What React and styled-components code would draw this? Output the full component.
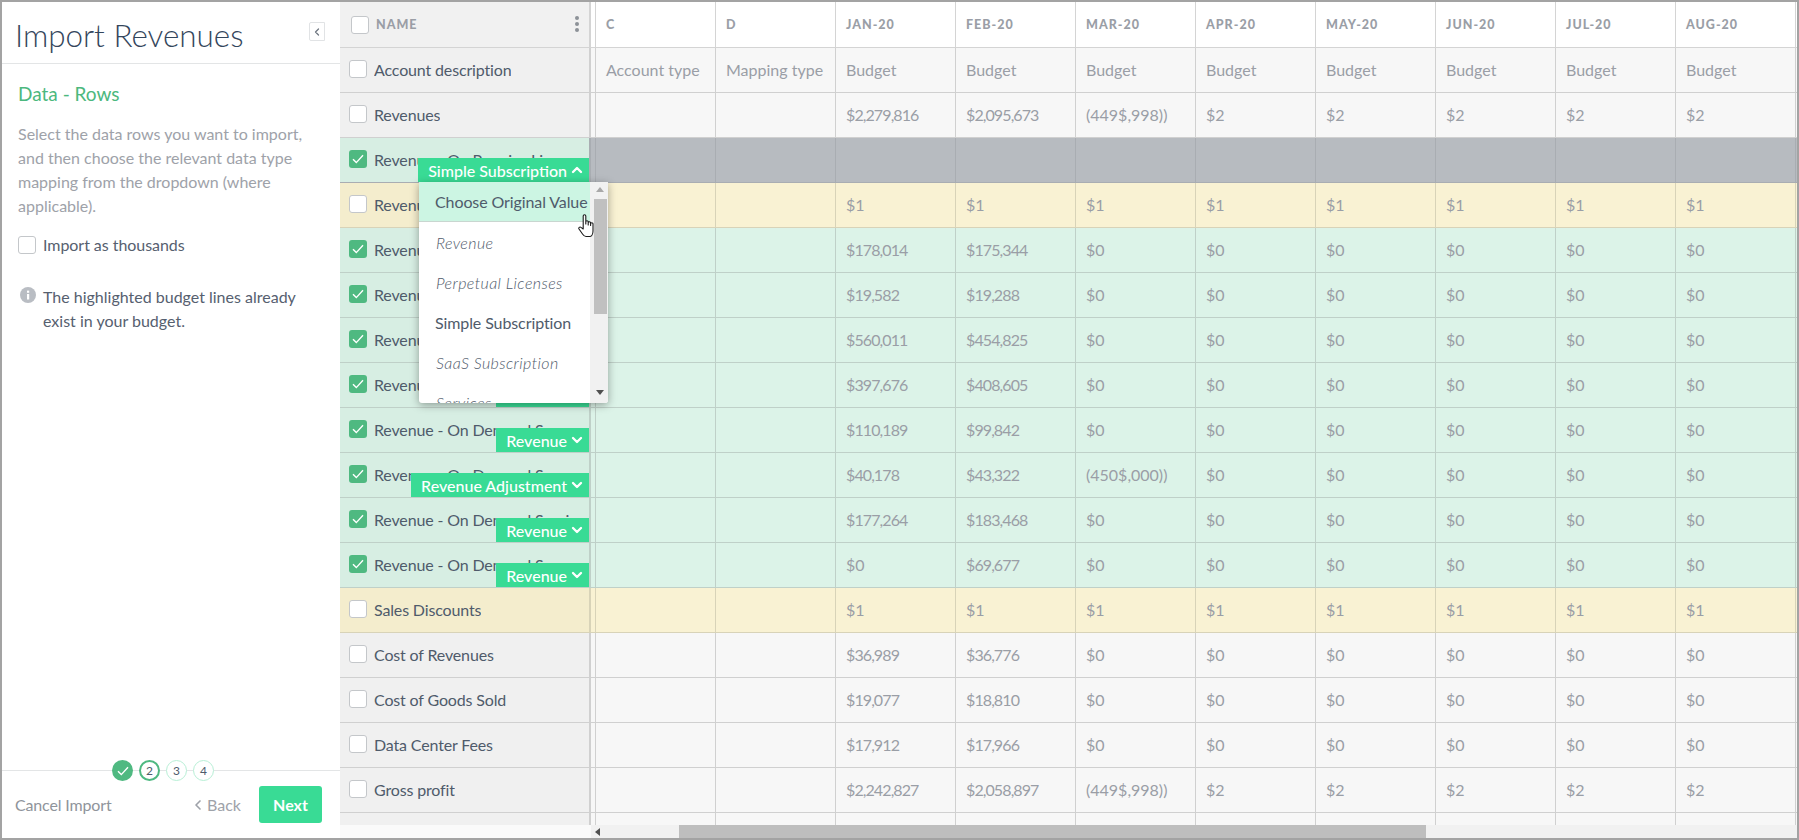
import React from 'react'
import styled, { createGlobalStyle } from 'styled-components'
import { ChevronDown, ChevronLeft, ChevronUp } from 'lucide-react'

const GlobalStyle = createGlobalStyle`
  html, body {
    margin: 0;
    background: #ffffff;
    font-family: Lato, "Liberation Sans", sans-serif;
  }
  * { box-sizing: border-box; }
`

const tones = {
  header: { name: '#f1f1f1', cell: '#ffffff', line: '#d4d4d4' },
  plain: { name: '#f0f0f0', cell: '#f7f7f7', line: '#d0d0d0' },
  gray: { name: '#d7eee3', cell: '#b7bbc0', line: '#a9adb2' },
  yellow: { name: '#f4edcd', cell: '#f9f2d3', line: '#d8d3b8' },
  green: { name: '#d7eee3', cell: '#dcf3e8', line: '#bfd0c8' },
}

const Frame = styled.div`
  width: 1799px;
  height: 840px;
  border: 2px solid #a3a3a3;
  display: flex;
  overflow: hidden;
  background: #ffffff;
`

const Sidebar = styled.aside`
  width: 338px;
  flex: none;
  display: flex;
  flex-direction: column;
`

const SideHeader = styled.header`
  height: 62px;
  flex: none;
  border-bottom: 1px solid #e3e5e6;
  display: flex;
  padding: 14px 15px 0 13px;
  justify-content: space-between;
`

const Title = styled.h1`
  margin: 0;
  font-size: 31.4px;
  line-height: 38px;
  font-weight: 300;
  color: #34465c;
`

const Collapse = styled.button`
  width: 16px;
  height: 19px;
  margin-top: 6px;
  padding: 0;
  border: 1px solid #e1e3e5;
  border-radius: 2px 0 0 2px;
  background: #ffffff;
  color: #6f7781;
  display: flex;
  align-items: center;
  justify-content: center;
`

const SideBody = styled.div`
  flex: 1;
  padding: 18px 16px 0;
`

const Heading = styled.h2`
  margin: 0 0 16px;
  font-size: 19px;
  line-height: 24px;
  font-weight: 400;
  color: #4cb87e;
`

const Intro = styled.p`
  margin: 0 0 17px;
  font-size: 16px;
  line-height: 24px;
  color: #9ea2a9;
`

const CheckRow = styled.label`
  display: flex;
  align-items: center;
  gap: 7px;
  font-size: 16px;
  letter-spacing: -0.05px;
  color: #56606f;
`

const Note = styled.div`
  display: flex;
  gap: 7px;
  margin-top: 31px;
  padding-left: 2px;
  font-size: 16px;
  line-height: 24px;
  color: #56606f;
`

const NoteIcon = styled.svg`
  width: 16px;
  height: 16px;
  flex: none;
  margin-top: 2px;
`

const SideFooter = styled.footer`
  height: 68px;
  flex: none;
  border-top: 1px solid #e3e5e6;
`

const Stepper = styled.div`
  display: flex;
  gap: 6px;
  margin: -11px 0 0 110px;
  position: relative;
`

const Step = styled.span`
  width: 21px;
  height: 21px;
  border-radius: 50%;
  display: flex;
  align-items: center;
  justify-content: center;
  font-size: 12px;
  color: #4f5b6b;
  background: ${p => (p.$done ? '#4fb981' : '#ffffff')};
  border: ${p => (p.$active ? '2px solid #4fb981' : p.$done ? 'none' : '1px solid #b8efd6')};
`

const Actions = styled.div`
  display: flex;
  align-items: center;
  padding: 5px 18px 0 13px;
`

const CancelLink = styled.span`
  flex: 1;
  font-size: 16px;
  letter-spacing: -0.15px;
  color: #8f949b;
`

const BackLink = styled.span`
  display: flex;
  align-items: center;
  gap: 1px;
  margin-right: 18px;
  font-size: 16px;
  color: #9ea2a9;
`

const NextButton = styled.button`
  width: 63px;
  height: 37px;
  border: 0;
  border-radius: 3px;
  background: #39db95;
  color: #ffffff;
  font: 700 16px Lato, sans-serif;
`

const Main = styled.main`
  flex: 1;
  min-width: 0;
  display: flex;
  flex-direction: column;
`

const Table = styled.div`
  flex: 1;
  overflow: hidden;
`

const Row = styled.div`
  display: flex;
  height: ${p => (p.$tone === 'header' ? '46px' : '45px')};
  border-bottom: 1px solid ${p => tones[p.$tone].line};
`

const NameCell = styled.div`
  width: 251px;
  flex: none;
  position: relative;
  display: flex;
  align-items: center;
  gap: 7px;
  padding-left: ${p => (p.$head ? '11px' : '9px')};
  padding-bottom: ${p => (p.$head ? '0' : '2px')};
  background: ${p => tones[p.$tone].name};
  border-right: 2px solid ${p => tones[p.$tone].line};
`

const NameText = styled.span`
  white-space: nowrap;
  overflow: hidden;
  font-size: 16px;
  letter-spacing: -0.15px;
  color: #4f5b6b;
`

const HeadName = styled.span`
  flex: 1;
  font-size: 12.5px;
  font-weight: 900;
  letter-spacing: 1px;
  color: #9a9ea6;
`

const Kebab = styled.svg`
  width: 6px;
  height: 18px;
  margin-right: 9px;
  margin-top: -1px;
`

const Gutter = styled.div`
  width: 4px;
  flex: none;
  background: ${p => tones[p.$tone].cell};
`

const Cell = styled.div`
  width: 120px;
  flex: none;
  display: flex;
  align-items: center;
  padding: 0 0 2px 10px;
  background: ${p => tones[p.$tone].cell};
  border-left: 1px solid ${p => tones[p.$tone].line};
  font-size: 16px;
  letter-spacing: ${p => (p.$tight ? '-0.9px' : '0')};
  color: #9a9ea6;
`

const HeadCell = styled(Cell)`
  padding-bottom: 0;
  font-size: 12.5px;
  font-weight: 900;
  letter-spacing: 1px;
`

const Box = styled.span`
  width: 18px;
  height: 18px;
  flex: none;
  border-radius: 3px;
  display: flex;
  align-items: center;
  justify-content: center;
  background: ${p => (p.$on ? '#4fb981' : '#ffffff')};
  border: ${p => (p.$on ? 'none' : '1px solid #c4c7ca')};
`

const Tag = styled.div`
  position: absolute;
  right: 0;
  bottom: 0;
  height: 24px;
  display: flex;
  align-items: center;
  gap: 2px;
  padding: 0 4px 0 10px;
  background: #39db95;
  color: #ffffff;
  font-size: 16px;
  font-weight: 500;
  white-space: nowrap;
`

const Menu = styled.div`
  position: absolute;
  z-index: 5;
  left: 79px;
  top: 44px;
  width: 189px;
  height: 221px;
  display: flex;
  overflow: hidden;
  background: #ffffff;
  border-radius: 0 0 3px 3px;
  box-shadow: 0 2px 9px rgba(0, 0, 0, 0.35);
`

const MenuList = styled.div`
  flex: 1;
  min-width: 0;
`

const MenuItem = styled.div`
  height: 40px;
  display: flex;
  align-items: center;
  padding-left: ${p => (p.$muted ? '17px' : '16px')};
  white-space: nowrap;
  font-size: 16px;
  font-style: ${p => (p.$muted ? 'italic' : 'normal')};
  font-weight: ${p => (p.$muted ? 300 : 400)};
  letter-spacing: ${p => (p.$muted ? '0.4px' : '-0.1px')};
  color: #4f5b6b;
  background: ${p => (p.$hover ? '#ccf5e3' : 'transparent')};
  border-bottom: ${p => (p.$hover ? '1px solid #c9d6d0' : 'none')};
`

const MenuTrack = styled.div`
  width: 18px;
  flex: none;
  padding: 0 1px 0 3px;
  background: #f1f1f1;
  display: flex;
  flex-direction: column;
  align-items: center;
`

const MenuThumb = styled.div`
  width: 13px;
  height: 115px;
  margin-bottom: auto;
  background: #c0c0c0;
`

const Arrow = styled.span`
  width: 0;
  height: 0;
  flex: none;
  border-left: 4px solid transparent;
  border-right: 4px solid transparent;
  ${p => (p.$down
    ? 'border-top: 5px solid #505050; margin-bottom: 8px;'
    : 'border-bottom: 5px solid #a8a8a8; margin: 5px 0 7px;')}
`

const Hand = styled.svg`
  position: absolute;
  left: 159px;
  top: 32px;
  width: 17px;
  height: 24px;
`

const HScroll = styled.div`
  height: 13px;
  flex: none;
  display: flex;
  background: #fafafa;
`

const HTrack = styled.div`
  flex: 1;
  margin-left: 251px;
  padding-left: 4px;
  display: flex;
  align-items: center;
  background: #f1f1f1;
`

const HArrow = styled.span`
  width: 0;
  height: 0;
  border-top: 4px solid transparent;
  border-bottom: 4px solid transparent;
  border-right: 5px solid #505050;
`

const HThumb = styled.div`
  width: 747px;
  height: 100%;
  margin-left: 79px;
  background: #bebebe;
`

function Tick() {
  return (
    <svg width="12" height="10" viewBox="0 0 12 10" fill="none" stroke="#ffffff" strokeWidth="1.4">
      <path d="M1 5.2 4.3 8.6 11 1.2" />
    </svg>
  )
}

function Check({ on }) {
  return <Box $on={on}>{on && <Tick />}</Box>
}

const months = ['C', 'D', 'JAN-20', 'FEB-20', 'MAR-20', 'APR-20', 'MAY-20', 'JUN-20', 'JUL-20', 'AUG-20', '']

const fill = (value, n = 5) => Array(n).fill(value)
const zeros = (a, b) => ['', '', a, b, '$0', ...fill('$0')]
const ones = ['', '', ...fill('$1', 8)]

const rows = [
  { tone: 'plain', name: 'Account description', cells: ['Account type', 'Mapping type', ...fill('Budget', 8)] },
  { tone: 'plain', name: 'Revenues', cells: ['', '', '$2,279,816', '$2,095,673', '(449$,998))', ...fill('$2')] },
  { tone: 'gray', name: 'Revenue - On Premise Lic', on: true, tag: 'Simple Subscription', open: true, cells: fill('', 10) },
  { tone: 'yellow', name: 'Revenue', cells: ones },
  { tone: 'green', name: 'Revenue - On Premise', on: true, tag: 'Revenue', cells: zeros('$178,014', '$175,344') },
  { tone: 'green', name: 'Revenue - On Premise', on: true, tag: 'Revenue', cells: zeros('$19,582', '$19,288') },
  { tone: 'green', name: 'Revenue - On Premise', on: true, tag: 'Revenue', cells: zeros('$560,011', '$454,825') },
  { tone: 'green', name: 'Revenue - On Premise', on: true, tag: 'Revenue', cells: zeros('$397,676', '$408,605') },
  { tone: 'green', name: 'Revenue - On Demand S', on: true, tag: 'Revenue', cells: zeros('$110,189', '$99,842') },
  { tone: 'green', name: 'Revenue - On Demand S', on: true, tag: 'Revenue Adjustment', cells: ['', '', '$40,178', '$43,322', '(450$,000))', ...fill('$0')] },
  { tone: 'green', name: 'Revenue - On Demand Servi', on: true, tag: 'Revenue', cells: zeros('$177,264', '$183,468') },
  { tone: 'green', name: 'Revenue - On Demand S', on: true, tag: 'Revenue', cells: zeros('$0', '$69,677') },
  { tone: 'yellow', name: 'Sales Discounts', cells: ones },
  { tone: 'plain', name: 'Cost of Revenues', cells: zeros('$36,989', '$36,776') },
  { tone: 'plain', name: 'Cost of Goods Sold', cells: zeros('$19,077', '$18,810') },
  { tone: 'plain', name: 'Data Center Fees', cells: zeros('$17,912', '$17,966') },
  { tone: 'plain', name: 'Gross profit', cells: ['', '', '$2,242,827', '$2,058,897', '(449$,998))', ...fill('$2')] },
  { tone: 'plain', name: '', blank: true, cells: fill('', 10) },
]

const options = [
  { label: 'Choose Original Value', hover: true },
  { label: 'Revenue', muted: true },
  { label: 'Perpetual Licenses', muted: true },
  { label: 'Simple Subscription' },
  { label: 'SaaS Subscription', muted: true },
  { label: 'Services', muted: true },
]

function Dropdown() {
  return (
    <Menu>
      <MenuList>
        {options.map(o => (
          <MenuItem key={o.label} $hover={o.hover} $muted={o.muted}>{o.label}</MenuItem>
        ))}
      </MenuList>
      <MenuTrack>
        <Arrow />
        <MenuThumb />
        <Arrow $down />
      </MenuTrack>
      <Hand viewBox="0 0 17 24" fill="#ffffff" stroke="#1a1a1a" strokeWidth="1.1" strokeLinejoin="round">
        <path d="M5.2 2a1.3 1.3 0 0 1 2.6 0v8V8a1.2 1.2 0 0 1 2.4 0v3V9a1.2 1.2 0 0 1 2.4 0v2.5V10a1.2 1.2 0 0 1 2.4 0v7c0 3-1.5 5.5-3.5 5.5H8c-1.5 0-2.5-1-3.5-2.5L1 15c-.8-1.2.8-2.6 2-1.6L5.2 15Z" />
      </Hand>
    </Menu>
  )
}

function DataRow({ row }) {
  return (
    <Row $tone={row.tone}>
      <NameCell $tone={row.tone}>
        {!row.blank && <Check on={row.on} />}
        <NameText>{row.name}</NameText>
        {row.tag && (
          <Tag>
            {row.tag}
            {row.open
              ? <ChevronUp size={16} strokeWidth={3.5} />
              : <ChevronDown size={16} strokeWidth={3.5} />}
          </Tag>
        )}
        {row.open && <Dropdown />}
      </NameCell>
      <Gutter $tone={row.tone} />
      {row.cells.map((c, i) => <Cell key={i} $tone={row.tone} $tight={/^\$.*,/.test(c)}>{c}</Cell>)}
      <Cell $tone={row.tone} />
    </Row>
  )
}

export default function App() {
  return (
    <>
      <GlobalStyle />
      <Frame>
        <Sidebar>
          <SideHeader>
            <Title>Import Revenues</Title>
            <Collapse><ChevronLeft size={12} strokeWidth={2.5} /></Collapse>
          </SideHeader>
          <SideBody>
            <Heading>Data - Rows</Heading>
            <Intro>
              Select the data rows you want to import, and then choose the relevant data type
              mapping from the dropdown (where applicable).
            </Intro>
            <CheckRow><Check />Import as thousands</CheckRow>
            <Note>
              <NoteIcon viewBox="0 0 16 16">
                <circle cx="8" cy="8" r="8" fill="#b9bdc3" />
                <rect x="7" y="7" width="2.2" height="5.5" fill="#ffffff" />
                <rect x="7" y="3.6" width="2.2" height="2.2" fill="#ffffff" />
              </NoteIcon>
              <span>The highlighted budget lines already exist in your budget.</span>
            </Note>
          </SideBody>
          <SideFooter>
            <Stepper>
              <Step $done><Tick /></Step>
              <Step $active>2</Step>
              <Step>3</Step>
              <Step>4</Step>
            </Stepper>
            <Actions>
              <CancelLink>Cancel Import</CancelLink>
              <BackLink><ChevronLeft size={16} strokeWidth={2.5} />Back</BackLink>
              <NextButton>Next</NextButton>
            </Actions>
          </SideFooter>
        </Sidebar>
        <Main>
          <Table>
            <Row $tone="header">
              <NameCell $tone="header" $head>
                <Check />
                <HeadName>NAME</HeadName>
                <Kebab viewBox="0 0 6 18" fill="#8d9298">
                  <circle cx="3" cy="3" r="2" />
                  <circle cx="3" cy="9" r="2" />
                  <circle cx="3" cy="15" r="2" />
                </Kebab>
              </NameCell>
              <Gutter $tone="header" />
              {months.map(m => <HeadCell key={m} $tone="header">{m}</HeadCell>)}
            </Row>
            {rows.map((row, i) => <DataRow key={i} row={row} />)}
          </Table>
          <HScroll>
            <HTrack>
              <HArrow />
              <HThumb />
            </HTrack>
          </HScroll>
        </Main>
      </Frame>
    </>
  )
}
